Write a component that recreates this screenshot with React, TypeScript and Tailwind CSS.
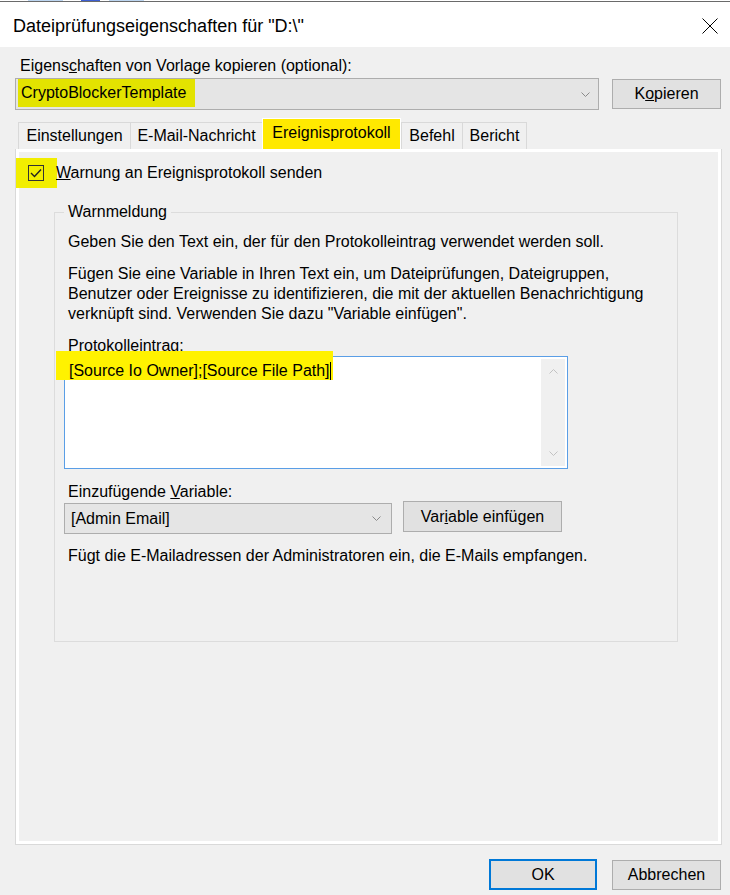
import React from "react";

const Chevron = ({ className = "", up = false, color = "#8a8a8a" }: { className?: string; up?: boolean; color?: string }) => (
  <svg width="9" height="5" viewBox="0 0 9 5" className={className}>
    <path d={up ? "M0.5 4.5 L4.5 0.5 L8.5 4.5" : "M0.5 0.5 L4.5 4.5 L8.5 0.5"} fill="none" stroke={color} strokeWidth="1" />
  </svg>
);

const Tab = ({ label, w, active = false, last = false }: { label: string; w: string; active?: boolean; last?: boolean }) => {
  if (active) {
    return (
      <div className={`${w} h-[31px] bg-[#ffe900] border-t border-x border-white flex items-center justify-center pb-[3px]`}>
        {label}
      </div>
    );
  }
  return (
    <div
      className={`${w} h-[27px] border-t border-l ${last ? "border-r" : ""} border-[#d9d9d9] bg-[#f0f0f0] flex items-center justify-center`}
    >
      {label}
    </div>
  );
};

const Button = ({ children, className = "" }: { children: React.ReactNode; className?: string }) => (
  <button className={`bg-[#e1e1e1] border border-[#adadad] flex items-center justify-center ${className}`}>
    {children}
  </button>
);

export default function App() {
  return (
    <div className="w-[730px] h-[895px] bg-[#f0f0f0] flex flex-col text-black text-[16px] leading-[20px] overflow-hidden font-['Liberation_Sans',Arial,sans-serif]">
      {/* top edge */}
      <div className="h-px bg-white flex">
        <div className="ml-[28px] w-[35px] bg-[#bcd5f0]" />
        <div className="ml-[18px] w-[19px] bg-[#3d5fd2]" />
        <div className="ml-[9px] w-[35px] bg-[#bcd5f0]" />
      </div>
      <div className="h-px bg-[#6a6a6a]" />

      {/* title bar */}
      <div className="h-[45px] bg-white flex items-center justify-between pl-[13px] pr-[12px] pt-[3px]">
        <span className="text-[18px]">Dateiprüfungseigenschaften für "D:\"</span>
        <svg width="16" height="16" viewBox="0 0 16 16">
          <path d="M0.5 0.5 L15.5 15.5 M15.5 0.5 L0.5 15.5" stroke="#000" strokeWidth="1" />
        </svg>
      </div>

      <div className="flex-1 flex flex-col pl-[15px]">
        <div className="mt-[9px] pl-[5px]">
          Eigens<u>c</u>haften von Vorlage kopieren (optional):
        </div>

        <div className="mt-[2px] flex items-center">
          <div className="w-[584px] h-[32px] border border-[#adadad] bg-[#e5e5e5] flex items-start pl-[2px]">
            <div className="h-[28px] w-[177px] bg-[#e3e300] pl-[3px] flex items-center">CryptoBlockerTemplate</div>
            <Chevron className="ml-auto mr-[8px] self-center" />
          </div>
          <Button className="ml-[13px] w-[109px] h-[30px]">
            K<u>o</u>pieren
          </Button>
        </div>

        {/* tabs */}
        <div className="mt-[8px] h-[31px] flex items-end pl-[3px]">
          <Tab label="Einstellungen" w="w-[112px]" />
          <Tab label="E-Mail-Nachricht" w="w-[132px]" />
          <Tab label="Ereignisprotokoll" w="w-[139px]" active />
          <Tab label="Befehl" w="w-[61px]" />
          <Tab label="Bericht" w="w-[65px]" last />
        </div>

        <div className="w-[707px] h-[696px] border border-[#d9d9d9] border-t-0">
          <div className="h-full border-[3px] border-white flex flex-col">
            <div className="mt-[6px] h-[30px] flex items-center">
              <div className="-ml-[3px] w-[41px] h-[30px] bg-[#f2ee00] flex items-center pl-[12px]">
                <div className="w-[16px] h-[16px] border border-[#333] flex items-center justify-center">
                  <svg width="12" height="10" viewBox="0 0 12 10">
                    <path d="M1 5 L4.5 8.5 L11 1.5" fill="none" stroke="#222" strokeWidth="1.4" />
                  </svg>
                </div>
              </div>
              <span className="-ml-px">
                <u>W</u>arnung an Ereignisprotokoll senden
              </span>
            </div>

            <fieldset className="ml-[35px] mt-[14px] w-[624px] h-[440px] border border-[#dcdcdc]">
              <legend className="ml-[9px] px-[4px]">Warnmeldung</legend>
              <div className="flex flex-col pl-[9px]">
                <div className="mt-[10px] pl-[4px]">
                  Geben Sie den Text ein, der für den Protokolleintrag verwendet werden soll.
                </div>
                <div className="mt-[12px] pl-[4px]">
                  Fügen Sie eine Variable in Ihren Text ein, um Dateiprüfungen, Dateigruppen,
                  <br />
                  Benutzer oder Ereignisse zu identifizieren, die mit der aktuellen Benachrichtigung
                  <br />
                  verknüpft sind. Verwenden Sie dazu "Variable einfügen".
                </div>
                <div className="mt-[12px] pl-[4px]">
                  <u>P</u>rotokolleintrag:
                </div>

                <div className="w-[504px] h-[113px] border border-[#5a9ee6] bg-white flex relative">
                  <div className="absolute -left-[9px] -top-[6px] w-[277px] h-[29px] bg-[#fff200]" />
                  <div className="relative flex-1 pl-[4px] pt-[4px] flex items-start">
                    <span>[Source Io Owner];[Source File Path]</span>
                    <span className="inline-block w-px h-[18px] bg-black mt-[1px]" />
                  </div>
                  <div className="w-[24px] my-[2px] mr-[2px] bg-[#f0f0f0] flex flex-col items-center justify-between py-[10px]">
                    <Chevron up color="#c2c2c2" />
                    <Chevron color="#c2c2c2" />
                  </div>
                </div>

                <div className="mt-[13px] pl-[4px]">
                  Einzufügende <u>V</u>ariable:
                </div>
                <div className="-mt-px flex items-start">
                  <div className="mt-[2px] w-[328px] h-[31px] border border-[#adadad] bg-[#e5e5e5] flex items-center pl-[6px]">
                    <span>[Admin Email]</span>
                    <Chevron className="ml-auto mr-[10px]" />
                  </div>
                  <Button className="ml-[11px] w-[159px] h-[31px]">
                    Var<u>i</u>able einfügen
                  </Button>
                </div>
                <div className="mt-[12px] pl-[4px]">
                  Fügt die E-Mailadressen der Administratoren ein, die E-Mails empfangen.
                </div>
              </div>
            </fieldset>
          </div>
        </div>

        <div className="mt-[14px] flex justify-end items-center pr-[9px] gap-[15px]">
          <button className="w-[108px] h-[31px] bg-[#e1e1e1] border-2 border-[#0078d7] flex items-center justify-center">
            OK
          </button>
          <Button className="w-[109px] h-[30px]">Abbrechen</Button>
        </div>
      </div>
    </div>
  );
}
